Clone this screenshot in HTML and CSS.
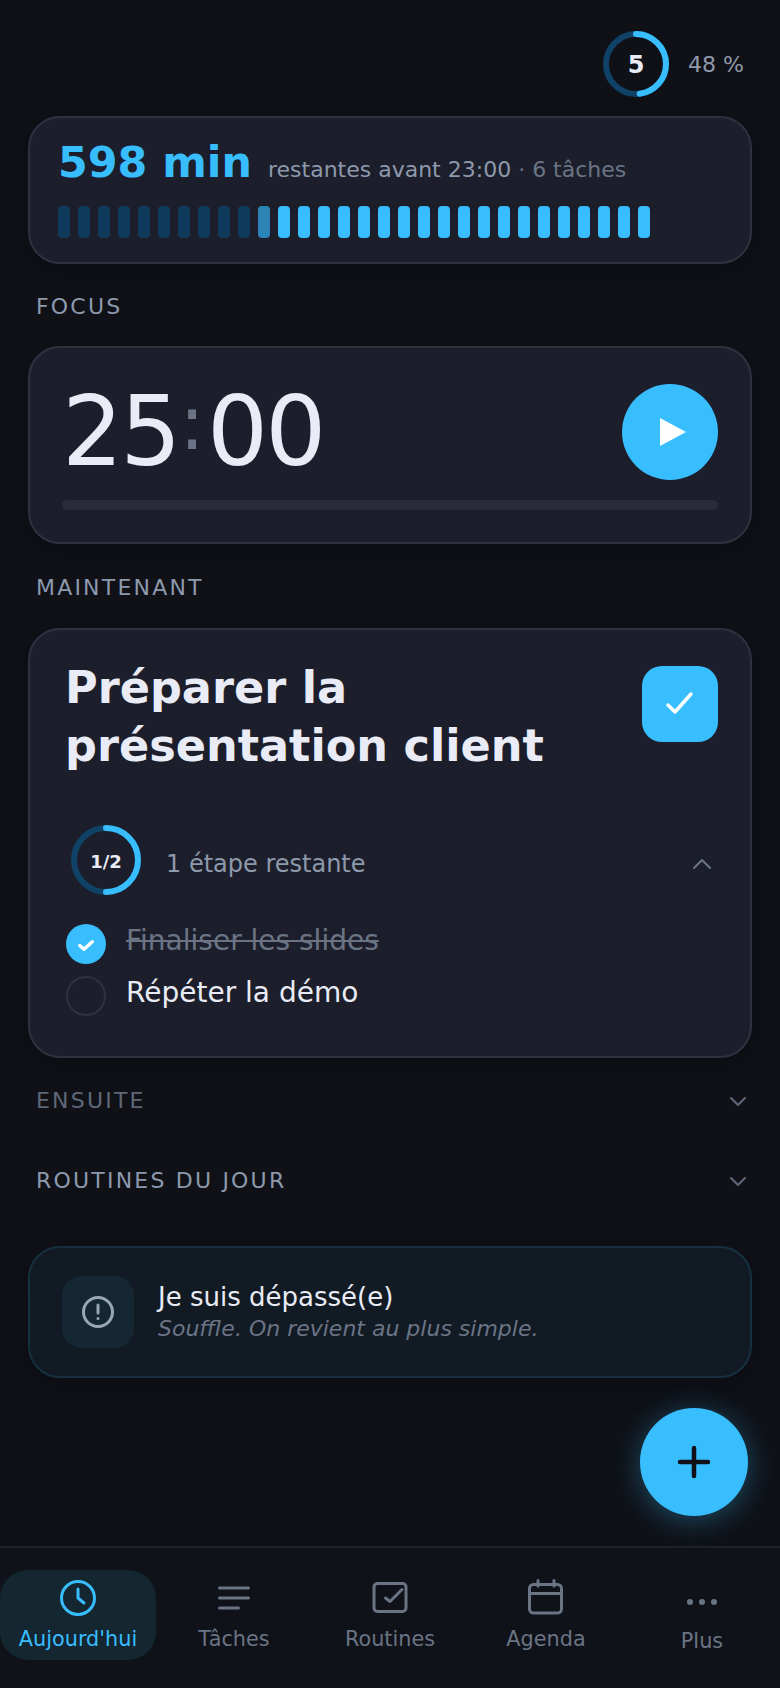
FILE: index.html
```html
<!DOCTYPE html>
<html lang="fr">

<head>
    <meta charset="UTF-8">
    <meta name="viewport" content="width=device-width, initial-scale=1.0">
    <title>Aujourd'hui</title>
    <link rel="stylesheet" href="styles.css">
</head>

<body>
    <div class="app">
        <main class="content">
            <header class="top">
                <div class="ring ring-level">
                    <svg viewBox="0 0 66 66" width="66" height="66">
                        <circle class="ring-track" cx="33" cy="33" r="30"></circle>
                        <circle class="ring-value" cx="33" cy="33" r="30" pathLength="100" stroke-dasharray="48 100" transform="rotate(-90 33 33)"></circle>
                    </svg>
                    <span class="ring-text level-text">5</span>
                </div>
                <span class="percent">48 %</span>
            </header>

            <section class="card time-card">
                <div class="time-line">
                    <span class="time-big">598 min</span>
                    <span class="time-sub">restantes avant 23:00 <em>· 6 tâches</em></span>
                </div>
                <div class="bars">
                    <span class="bar past"></span><span class="bar past"></span><span class="bar past"></span><span class="bar past"></span><span class="bar past"></span>
                    <span class="bar past"></span><span class="bar past"></span><span class="bar past"></span><span class="bar past"></span><span class="bar past"></span>
                    <span class="bar current"></span>
                    <span class="bar"></span><span class="bar"></span><span class="bar"></span><span class="bar"></span><span class="bar"></span>
                    <span class="bar"></span><span class="bar"></span><span class="bar"></span><span class="bar"></span><span class="bar"></span>
                    <span class="bar"></span><span class="bar"></span><span class="bar"></span><span class="bar"></span><span class="bar"></span>
                    <span class="bar"></span><span class="bar"></span><span class="bar"></span><span class="bar"></span>
                </div>
            </section>

            <h2 class="label">FOCUS</h2>

            <section class="card focus-card">
                <div class="focus-row">
                    <div class="timer">25<span class="colon">:</span>00</div>
                    <button class="play" type="button">
                        <svg viewBox="0 0 26 28" width="26" height="28"><path d="M0 0 26 14 0 28Z" fill="#fff"></path></svg>
                    </button>
                </div>
                <div class="focus-track"></div>
            </section>

            <h2 class="label label-now">MAINTENANT</h2>

            <section class="card now-card">
                <div class="now-head">
                    <h1 class="now-title">Préparer la présentation client</h1>
                    <button class="done" type="button">
                        <svg viewBox="0 0 32 32" width="32" height="32"><path class="check-thin" d="M4 17 11 24 27 6"></path></svg>
                    </button>
                </div>
                <div class="steps-head">
                    <div class="ring ring-steps">
                        <svg viewBox="0 0 70 70" width="70" height="70">
                            <circle class="ring-track" cx="35" cy="35" r="32"></circle>
                            <circle class="ring-value" cx="35" cy="35" r="32" pathLength="100" stroke-dasharray="50 100" transform="rotate(-90 35 35)"></circle>
                        </svg>
                        <span class="ring-text steps-text">1/2</span>
                    </div>
                    <span class="steps-left">1 étape restante</span>
                    <svg class="chevron-up" viewBox="0 0 18 10" width="18" height="10"><path d="M1 9 9 1 17 9"></path></svg>
                </div>
                <ul class="steps">
                    <li class="step step-done">
                        <span class="tick">
                            <svg viewBox="0 0 20 16" width="20" height="16"><path d="M3.75 9.5 8 13.25 16.25 5.75"></path></svg>
                        </span>
                        <span class="step-name">Finaliser les slides</span>
                    </li>
                    <li class="step">
                        <span class="tick"></span>
                        <span class="step-name">Répéter la démo</span>
                    </li>
                </ul>
            </section>

            <div class="fold fold-first">
                <span class="label-text dim">ENSUITE</span>
                <svg class="chevron" viewBox="0 0 16 9" width="16" height="9"><path d="M1 1 8 8 15 1"></path></svg>
            </div>
            <div class="fold">
                <span class="label-text">ROUTINES DU JOUR</span>
                <svg class="chevron" viewBox="0 0 16 9" width="16" height="9"><path d="M1 1 8 8 15 1"></path></svg>
            </div>

            <section class="card help-card">
                <div class="help-icon">
                    <svg viewBox="0 0 32 32" width="32" height="32">
                        <circle cx="16" cy="16" r="14.5"></circle>
                        <path d="M16 9V17"></path>
                        <path d="M16 22.5V22.6"></path>
                    </svg>
                </div>
                <div class="help-text">
                    <div class="help-title">Je suis dépassé(e)</div>
                    <div class="help-sub">Souffle. On revient au plus simple.</div>
                </div>
            </section>
        </main>

        <button class="fab" type="button">
            <svg viewBox="0 0 32 32" width="32" height="32"><path d="M16 2V30M2 16H30"></path></svg>
        </button>

        <nav class="tabs">
            <a class="tab active">
                <span class="tab-icon">
                    <svg viewBox="0 0 36 36" width="36" height="36">
                        <circle cx="18" cy="18" r="16.5"></circle>
                        <path d="M18 9V18L24 23"></path>
                    </svg>
                </span>
                <span class="tab-label">Aujourd'hui</span>
            </a>
            <a class="tab">
                <span class="tab-icon">
                    <svg viewBox="0 0 36 36" width="36" height="36"><path d="M3.5 8H32.5M3.5 18H32.5M3.5 28H22.5"></path></svg>
                </span>
                <span class="tab-label">Tâches</span>
            </a>
            <a class="tab">
                <span class="tab-icon">
                    <svg viewBox="0 0 36 36" width="36" height="36">
                        <rect x="2" y="3.5" width="32" height="28" rx="3.5"></rect>
                        <path d="M13.5 18 18 21.5 30 9.5"></path>
                    </svg>
                </span>
                <span class="tab-label">Routines</span>
            </a>
            <a class="tab">
                <span class="tab-icon">
                    <svg viewBox="0 0 36 36" width="36" height="36">
                        <rect x="1.5" y="4.5" width="32" height="28.5" rx="4"></rect>
                        <path d="M1.5 13.5H33.5M10 .5V6M26 .5V6"></path>
                    </svg>
                </span>
                <span class="tab-label">Agenda</span>
            </a>
            <a class="tab tab-more">
                <span class="tab-icon">
                    <svg viewBox="0 0 36 44" width="36" height="44">
                        <circle class="dot" cx="6" cy="26" r="3"></circle>
                        <circle class="dot" cx="18" cy="26" r="3"></circle>
                        <circle class="dot" cx="30" cy="26" r="3"></circle>
                    </svg>
                </span>
                <span class="tab-label">Plus</span>
            </a>
        </nav>
    </div>
</body>

</html>
```

FILE: styles.css
```css
* {
    box-sizing: border-box;
}

body {
    margin: 0;
    background: #0f1117;
    color: #e9ecf6;
    font-family: "DejaVu Sans", sans-serif;
}

.app {
    position: relative;
    display: flex;
    flex-direction: column;
    width: 780px;
    height: 1688px;
    overflow: hidden;
}

.content {
    flex: 1;
    padding: 31px 28px 0;
}

h1, h2, ul {
    margin: 0;
    padding: 0;
}

button {
    border: none;
    padding: 0;
    cursor: pointer;
}

svg {
    display: block;
    overflow: visible;
}

.top {
    display: flex;
    justify-content: flex-end;
    align-items: center;
    gap: 19px;
    padding-right: 8px;
    margin-bottom: 19px;
}

.percent {
    font-size: 22px;
    color: #8e99ab;
}

.ring {
    display: grid;
    place-items: center;
}

.ring > * {
    grid-area: 1 / 1;
}

.ring circle {
    fill: none;
    stroke-width: 6;
}

.ring-track {
    stroke: #0f4266;
}

.ring-value {
    stroke: #38bdff;
    stroke-linecap: round;
}

.ring-text {
    font-weight: 700;
}

.level-text {
    padding-top: 2px;
    font-size: 24px;
}

.steps-text {
    padding-top: 3px;
    font-size: 18px;
}

.card {
    background: #1c1f2b;
    border: 2px solid #2e3240;
    border-radius: 32px;
    box-shadow: 0 6px 24px rgba(0, 0, 0, .25);
}

.time-card {
    height: 148px;
    padding: 19px 28px 0;
}

.time-line {
    display: flex;
    align-items: baseline;
    gap: 16px;
    height: 53px;
}

.time-big {
    font-size: 42.8px;
    font-weight: 700;
    color: #38bdff;
}

.time-sub {
    font-size: 22px;
    color: #8e99ab;
}

.time-sub em {
    font-style: normal;
    color: #6b7485;
}

.bars {
    display: flex;
    gap: 8px;
    margin-top: 16px;
}

.bar {
    width: 12px;
    height: 32px;
    border-radius: 4px;
    background: #38bdff;
}

.bar.past {
    background: #0e3a5c;
}

.bar.current {
    background: #2c84b4;
}

.label,
.label-text {
    font-size: 22px;
    font-weight: 400;
    letter-spacing: 2.2px;
    line-height: 26px;
    color: #8d99ad;
}

.label {
    margin: 30px 8px 26px;
}

.label-now {
    margin: 31px 8px 27px;
}

.label-text.dim {
    color: #5f6878;
}

.focus-card {
    height: 198px;
    padding: 36px 32px 0;
}

.focus-row {
    display: flex;
    justify-content: space-between;
    align-items: center;
}

.timer {
    height: 96px;
    font-size: 96px;
    line-height: 96px;
    letter-spacing: -2.9px;
    color: #e9ecf6;
}

.colon {
    margin: 0 5px 0 1px;
    font-size: 76px;
    line-height: 1;
    vertical-align: 16px;
    color: #6b7485;
}

.play {
    display: flex;
    justify-content: center;
    align-items: center;
    width: 96px;
    height: 96px;
    padding-left: 6px;
    border-radius: 50%;
    background: #38bdff;
}

.focus-track {
    height: 10px;
    margin-top: 20px;
    border-radius: 5px;
    background: #292d3a;
}

.now-card {
    height: 430px;
    padding: 29px 32px 0;
}

.now-head {
    display: flex;
    justify-content: space-between;
    align-items: flex-start;
}

.now-title {
    width: 520px;
    margin-left: 3px;
    font-size: 44.6px;
    font-weight: 700;
    line-height: 58px;
}

.done {
    display: flex;
    justify-content: center;
    align-items: center;
    width: 76px;
    height: 76px;
    margin-top: 7px;
    border-radius: 20px;
    background: #38bdff;
}

.check-thin {
    fill: none;
    stroke: #fff;
    stroke-width: 3.5;
    stroke-linecap: round;
    stroke-linejoin: round;
}

.steps-head {
    display: flex;
    align-items: center;
    gap: 25px;
    margin: 50px 0 29px 9px;
}

.steps-left {
    flex: 1;
    padding-top: 7px;
    font-size: 24px;
    color: #8e99ab;
}

.chevron-up {
    margin: 7px 7px 0 0;
}

.chevron-up path,
.chevron path {
    fill: none;
    stroke: #6b7485;
    stroke-width: 2;
    stroke-linecap: round;
    stroke-linejoin: round;
}

.chevron path {
    stroke: #5f6878;
}

.steps {
    display: flex;
    flex-direction: column;
    gap: 12px;
    margin-left: 4px;
    list-style: none;
}

.step {
    display: flex;
    gap: 20px;
    font-size: 28px;
    line-height: 34px;
}

.tick {
    display: flex;
    justify-content: center;
    align-items: center;
    width: 40px;
    height: 40px;
    border: 2px solid #2e3240;
    border-radius: 50%;
}

.tick path {
    fill: none;
    stroke: #fff;
    stroke-width: 3.5;
    stroke-linecap: round;
    stroke-linejoin: round;
}

.step-done .tick {
    border: none;
    background: #38bdff;
}

.step-done .step-name {
    color: #6b7485;
    text-decoration: line-through;
}

.fold {
    display: flex;
    justify-content: space-between;
    align-items: center;
    height: 80px;
    padding: 0 6px 0 8px;
}

.fold-first {
    margin-top: 3px;
}

.help-card {
    display: flex;
    align-items: center;
    gap: 24px;
    height: 132px;
    margin-top: 25px;
    padding: 0 32px;
    background: #121a24;
    border-color: #17303f;
}

.help-icon {
    display: flex;
    justify-content: center;
    align-items: center;
    width: 72px;
    height: 72px;
    border-radius: 20px;
    background: #142733;
}

.help-icon circle,
.help-icon path {
    fill: none;
    stroke: #9aa5b5;
    stroke-width: 3;
    stroke-linecap: round;
}

.help-title {
    font-size: 26px;
    line-height: 32px;
}

.help-sub {
    margin-top: 2px;
    font-size: 22px;
    line-height: 28px;
    font-style: italic;
    color: #6b7485;
}

.fab {
    position: absolute;
    right: 32px;
    bottom: 172px;
    display: flex;
    justify-content: center;
    align-items: center;
    width: 108px;
    height: 108px;
    border-radius: 50%;
    background: #38bdff;
    box-shadow: 0 4px 28px rgba(56, 189, 255, .35);
}

.fab path {
    fill: none;
    stroke: #0f1117;
    stroke-width: 4.5;
    stroke-linecap: round;
}

.tabs {
    display: grid;
    grid-template-columns: repeat(5, 1fr);
    height: 142px;
    padding-top: 22px;
    border-top: 2px solid #1f222b;
    background: #0f1218;
}

.tab {
    display: flex;
    flex-direction: column;
    justify-content: center;
    align-items: center;
    gap: 8px;
    height: 90px;
    border-radius: 28px;
    color: #6b7485;
}

.tab.active {
    background: #14262f;
    color: #38bdff;
}

.tab-icon {
    display: flex;
    justify-content: center;
    align-items: center;
    height: 40px;
}

.tab-more .tab-icon {
    height: 44px;
}

.tab-icon circle,
.tab-icon rect,
.tab-icon path {
    fill: none;
    stroke: currentColor;
    stroke-width: 3;
    stroke-linecap: round;
    stroke-linejoin: round;
}

.tab-icon .dot {
    fill: currentColor;
    stroke: none;
}

.tab-label {
    font-size: 20.8px;
    line-height: 26px;
}
```
